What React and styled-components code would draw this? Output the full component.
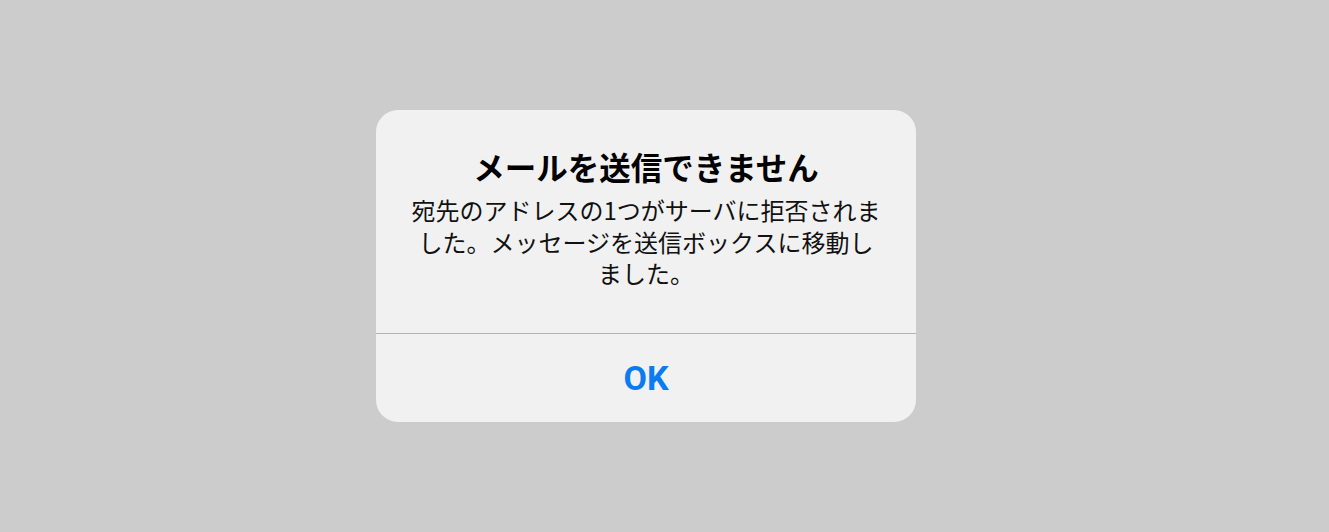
import React from 'react';
import styled, { createGlobalStyle } from 'styled-components';

const GlobalStyle = createGlobalStyle`
  html, body {
    margin: 0;
    padding: 0;
    background: #cccccc;
  }
  body {
    font-family: "Noto Sans CJK JP", "Noto Sans", sans-serif;
  }
`;

const Screen = styled.div`
  height: 532px;
  display: flex;
  align-items: center;
  padding-left: 376px;
  box-sizing: border-box;
`;

const Alert = styled.div`
  width: 540px;
  background: #f1f1f1;
  border-radius: 22px;
  overflow: hidden;
  display: flex;
  flex-direction: column;
`;

const Content = styled.div`
  padding: 36px 24px 35px;
  text-align: center;
  height: 223px;
  box-sizing: border-box;
`;

const Title = styled.h2`
  margin: 0 0 8px;
  font-size: 31.5px;
  line-height: 40px;
  font-weight: 700;
  color: #000;
`;

const Message = styled.p`
  margin: 0;
  font-size: 24px;
  line-height: 31.5px;
  font-weight: 400;
  color: #111;
`;

const Divider = styled.div`
  height: 1px;
  background: #b3b3b3;
`;

const Action = styled.button`
  height: 88px;
  border: 0;
  background: transparent;
  color: #0a7bf0;
  font-family: Roboto, "Noto Sans", sans-serif;
  font-size: 34px;
  font-weight: 700;
  cursor: pointer;
  padding: 0;
`;

export default function App() {
  return (
    <>
      <GlobalStyle />
      <Screen>
        <Alert>
          <Content>
            <Title>メールを送信できません</Title>
            <Message>
              宛先のアドレスの1つがサーバに拒否されま
              <br />
              した。メッセージを送信ボックスに移動し
              <br />
              ました。
            </Message>
          </Content>
          <Divider />
          <Action>OK</Action>
        </Alert>
      </Screen>
    </>
  );
}
